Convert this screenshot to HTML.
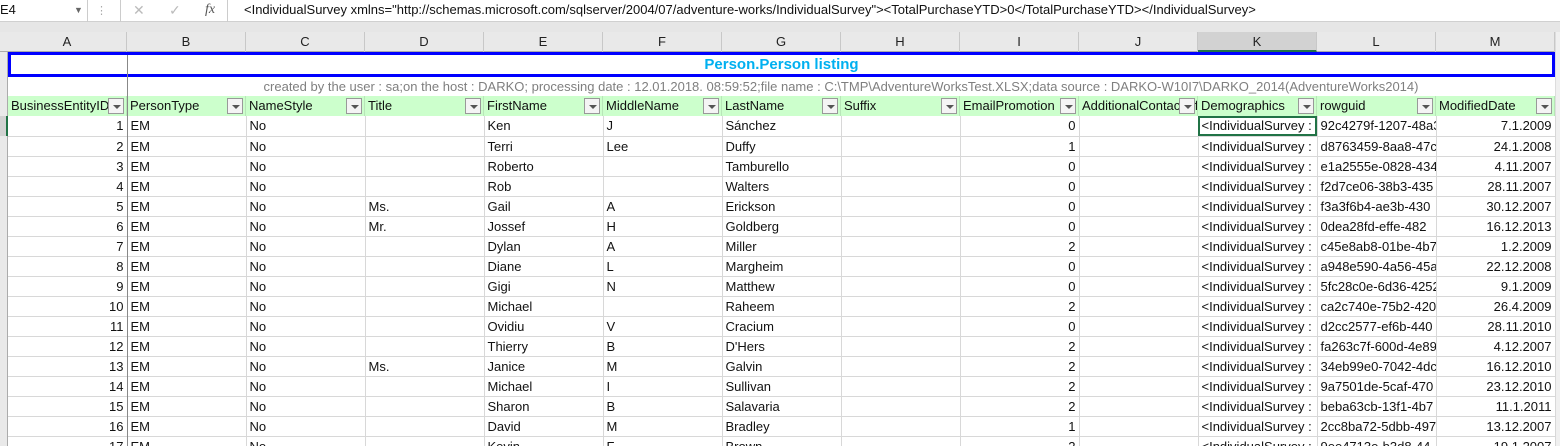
<!DOCTYPE html>
<html><head><meta charset="utf-8"><style>
*{margin:0;padding:0;box-sizing:border-box}
html,body{width:1560px;height:446px;overflow:hidden}
body{background:#fff;font-family:"Liberation Sans",sans-serif;font-size:13px;color:#111;position:relative}
.fb{position:absolute;top:0;left:0;width:1560px;height:22px;background:#fff;border-bottom:1px solid #d0d0d0}
.gap{position:absolute;top:22px;left:0;width:1560px;height:10px;background:#e6e6e6}
.ch{position:absolute;top:32px;left:0;height:20px;width:1560px;background:#e9e9e9;border-bottom:1px solid #ababab}
.ch div{position:absolute;top:0;height:20px;width:119px;border-right:1px solid #c8c8c8;text-align:center;line-height:20px;font-size:13px;color:#222}
table{position:absolute;left:8px;top:116px;border-collapse:collapse;table-layout:fixed;width:1547px}
td{height:20px;border-right:1px solid #d8d8d8;border-bottom:1px solid #d8d8d8;padding:0 3px;white-space:nowrap;overflow:hidden;line-height:19px}
td.r{text-align:right}
td.a{border-right:1px solid #888}
.hdr{position:absolute;left:8px;top:96px;height:20px;width:1547px;background:#ccffcc}
.hdr div{position:absolute;top:0;width:119px;height:20px;line-height:20px;padding-left:3px;padding-right:20px;border-right:1px solid #b8e6b8;white-space:nowrap;overflow:hidden}
.hdr div i{position:absolute;right:2px;top:2px;width:16px;height:16px;background:#f4f4f4;border:1px solid #999}
.hdr div i:after{content:"";position:absolute;left:4px;top:6px;border-left:4px solid transparent;border-right:4px solid transparent;border-top:4px solid #555}
.title{position:absolute;left:8px;top:52px;width:1547px;height:25px;border:3px solid #0000ff;text-align:center;color:#00b0f0;font-weight:bold;font-size:15px;line-height:19px}
.sub{position:absolute;left:127px;top:77px;width:1428px;height:20px;text-align:center;color:#7f7f7f;font-size:13px;line-height:20px}
</style></head><body>
<div class="fb">
 <div style="position:absolute;left:0;top:0;width:88px;height:22px;border-right:1px solid #ccc;line-height:20px;font-size:13px">E4<span style="position:absolute;left:74px;top:0;font-size:9px;color:#666">▼</span></div>
 <div style="position:absolute;left:96px;top:4px;color:#aaa;font-size:11px">⋮</div>
 <div style="position:absolute;left:120px;top:0;width:108px;height:22px;border-left:1px solid #ccc;border-right:1px solid #ccc;color:#bbb;line-height:20px;font-size:14px"><span style="position:absolute;left:12px">✕</span><span style="position:absolute;left:48px">✓</span><span style="position:absolute;left:84px;color:#555;font-style:italic;font-family:'Liberation Serif',serif">fx</span></div>
 <div style="position:absolute;left:244px;top:0;line-height:20px;font-size:13px">&lt;IndividualSurvey xmlns="http://schemas.microsoft.com/sqlserver/2004/07/adventure-works/IndividualSurvey"&gt;&lt;TotalPurchaseYTD&gt;0&lt;/TotalPurchaseYTD&gt;&lt;/IndividualSurvey&gt;</div>
</div>
<div class="gap"></div>
<div class="ch">
<div style="left:8px">A</div><div style="left:127px">B</div><div style="left:246px">C</div><div style="left:365px">D</div><div style="left:484px">E</div><div style="left:603px">F</div><div style="left:722px">G</div><div style="left:841px">H</div><div style="left:960px">I</div><div style="left:1079px">J</div><div style="left:1198px;background:#d2d2d2;border-bottom:2px solid #217346">K</div><div style="left:1317px">L</div><div style="left:1436px">M</div>
</div>
<div style="position:absolute;left:0;top:52px;width:8px;height:394px;background:#e9e9e9;border-right:1px solid #ababab"></div>
<div style="position:absolute;left:0;top:116px;width:8px;height:20px;background:#d2d2d2;border-right:2px solid #217346"></div>
<div style="position:absolute;left:1555px;top:32px;width:5px;height:414px;background:#f0f0f0;border-left:1px solid #ddd"></div>
<div class="title">Person.Person listing</div>
<div class="sub">created by the user : sa;on the host : DARKO; processing date : 12.01.2018. 08:59:52;file name : C:\TMP\AdventureWorksTest.XLSX;data source : DARKO-W10I7\DARKO_2014(AdventureWorks2014)</div>
<div class="hdr">
<div style="left:0">BusinessEntityID<i></i></div><div style="left:119px">PersonType<i></i></div><div style="left:238px">NameStyle<i></i></div><div style="left:357px">Title<i></i></div><div style="left:476px">FirstName<i></i></div><div style="left:595px">MiddleName<i></i></div><div style="left:714px">LastName<i></i></div><div style="left:833px">Suffix<i></i></div><div style="left:952px">EmailPromotion<i></i></div><div style="left:1071px">AdditionalContactInfo<i></i></div><div style="left:1190px">Demographics<i></i></div><div style="left:1309px">rowguid<i></i></div><div style="left:1428px">ModifiedDate<i></i></div>
</div>
<table>
<colgroup><col style="width:119px"><col style="width:119px"><col style="width:119px"><col style="width:119px"><col style="width:119px"><col style="width:119px"><col style="width:119px"><col style="width:119px"><col style="width:119px"><col style="width:119px"><col style="width:119px"><col style="width:119px"><col style="width:119px"></colgroup>
<tr><td class="r a">1</td><td>EM</td><td>No</td><td></td><td>Ken</td><td>J</td><td>Sánchez</td><td></td><td class="r">0</td><td></td><td style="outline:2px solid #217346;outline-offset:-2px">&lt;IndividualSurvey :</td><td>92c4279f-1207-48a3</td><td class="r">7.1.2009</td></tr>
<tr><td class="r a">2</td><td>EM</td><td>No</td><td></td><td>Terri</td><td>Lee</td><td>Duffy</td><td></td><td class="r">1</td><td></td><td>&lt;IndividualSurvey :</td><td>d8763459-8aa8-47c</td><td class="r">24.1.2008</td></tr>
<tr><td class="r a">3</td><td>EM</td><td>No</td><td></td><td>Roberto</td><td></td><td>Tamburello</td><td></td><td class="r">0</td><td></td><td>&lt;IndividualSurvey :</td><td>e1a2555e-0828-434</td><td class="r">4.11.2007</td></tr>
<tr><td class="r a">4</td><td>EM</td><td>No</td><td></td><td>Rob</td><td></td><td>Walters</td><td></td><td class="r">0</td><td></td><td>&lt;IndividualSurvey :</td><td>f2d7ce06-38b3-435</td><td class="r">28.11.2007</td></tr>
<tr><td class="r a">5</td><td>EM</td><td>No</td><td>Ms.</td><td>Gail</td><td>A</td><td>Erickson</td><td></td><td class="r">0</td><td></td><td>&lt;IndividualSurvey :</td><td>f3a3f6b4-ae3b-430</td><td class="r">30.12.2007</td></tr>
<tr><td class="r a">6</td><td>EM</td><td>No</td><td>Mr.</td><td>Jossef</td><td>H</td><td>Goldberg</td><td></td><td class="r">0</td><td></td><td>&lt;IndividualSurvey :</td><td>0dea28fd-effe-482</td><td class="r">16.12.2013</td></tr>
<tr><td class="r a">7</td><td>EM</td><td>No</td><td></td><td>Dylan</td><td>A</td><td>Miller</td><td></td><td class="r">2</td><td></td><td>&lt;IndividualSurvey :</td><td>c45e8ab8-01be-4b7</td><td class="r">1.2.2009</td></tr>
<tr><td class="r a">8</td><td>EM</td><td>No</td><td></td><td>Diane</td><td>L</td><td>Margheim</td><td></td><td class="r">0</td><td></td><td>&lt;IndividualSurvey :</td><td>a948e590-4a56-45a</td><td class="r">22.12.2008</td></tr>
<tr><td class="r a">9</td><td>EM</td><td>No</td><td></td><td>Gigi</td><td>N</td><td>Matthew</td><td></td><td class="r">0</td><td></td><td>&lt;IndividualSurvey :</td><td>5fc28c0e-6d36-4252</td><td class="r">9.1.2009</td></tr>
<tr><td class="r a">10</td><td>EM</td><td>No</td><td></td><td>Michael</td><td></td><td>Raheem</td><td></td><td class="r">2</td><td></td><td>&lt;IndividualSurvey :</td><td>ca2c740e-75b2-420</td><td class="r">26.4.2009</td></tr>
<tr><td class="r a">11</td><td>EM</td><td>No</td><td></td><td>Ovidiu</td><td>V</td><td>Cracium</td><td></td><td class="r">0</td><td></td><td>&lt;IndividualSurvey :</td><td>d2cc2577-ef6b-440</td><td class="r">28.11.2010</td></tr>
<tr><td class="r a">12</td><td>EM</td><td>No</td><td></td><td>Thierry</td><td>B</td><td>D'Hers</td><td></td><td class="r">2</td><td></td><td>&lt;IndividualSurvey :</td><td>fa263c7f-600d-4e89</td><td class="r">4.12.2007</td></tr>
<tr><td class="r a">13</td><td>EM</td><td>No</td><td>Ms.</td><td>Janice</td><td>M</td><td>Galvin</td><td></td><td class="r">2</td><td></td><td>&lt;IndividualSurvey :</td><td>34eb99e0-7042-4dc</td><td class="r">16.12.2010</td></tr>
<tr><td class="r a">14</td><td>EM</td><td>No</td><td></td><td>Michael</td><td>I</td><td>Sullivan</td><td></td><td class="r">2</td><td></td><td>&lt;IndividualSurvey :</td><td>9a7501de-5caf-470</td><td class="r">23.12.2010</td></tr>
<tr><td class="r a">15</td><td>EM</td><td>No</td><td></td><td>Sharon</td><td>B</td><td>Salavaria</td><td></td><td class="r">2</td><td></td><td>&lt;IndividualSurvey :</td><td>beba63cb-13f1-4b7</td><td class="r">11.1.2011</td></tr>
<tr><td class="r a">16</td><td>EM</td><td>No</td><td></td><td>David</td><td>M</td><td>Bradley</td><td></td><td class="r">1</td><td></td><td>&lt;IndividualSurvey :</td><td>2cc8ba72-5dbb-497</td><td class="r">13.12.2007</td></tr>
<tr><td class="r a">17</td><td>EM</td><td>No</td><td></td><td>Kevin</td><td>F</td><td>Brown</td><td></td><td class="r">2</td><td></td><td>&lt;IndividualSurvey :</td><td>9ee4713e-b3d8-44</td><td class="r">19.1.2007</td></tr>
</table>
<div style="position:absolute;left:127px;top:55px;width:1px;height:391px;background:#888"></div>
</body></html>
